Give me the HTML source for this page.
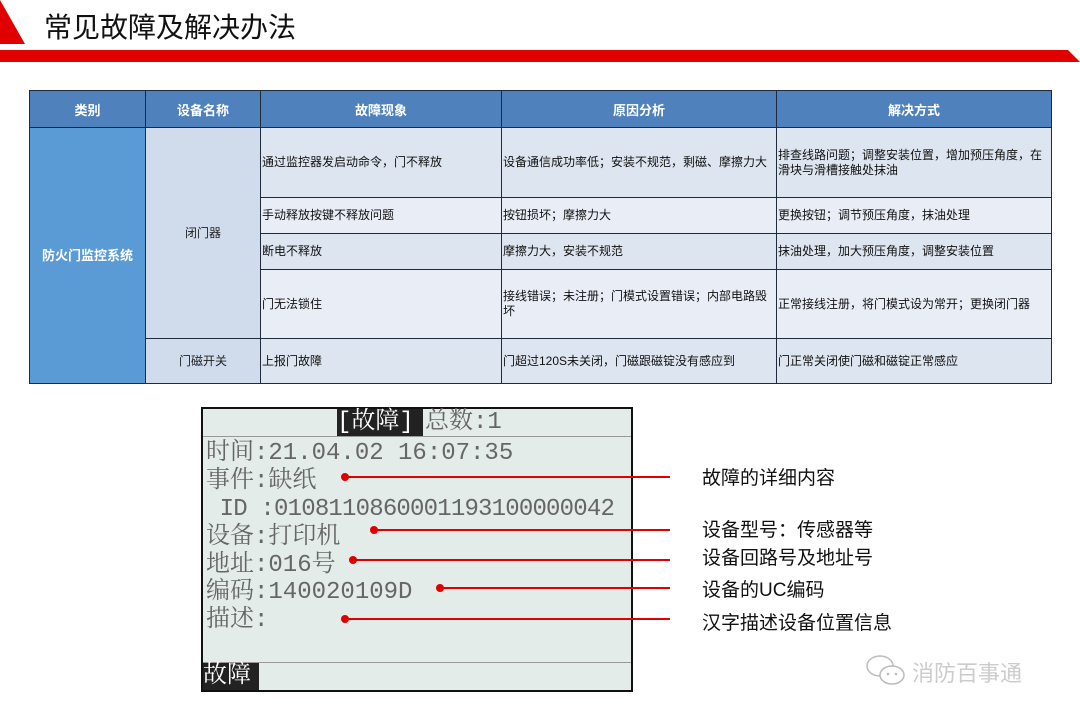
<!DOCTYPE html>
<html><head><meta charset="utf-8"><style>
body{margin:0;width:1080px;height:720px;background:#fff;position:relative;overflow:hidden;font-family:"Liberation Sans","Noto Sans CJK SC",sans-serif}
.abs{position:absolute}
table{position:absolute;left:29px;top:90px;width:1022px;table-layout:fixed;border-collapse:collapse;font-size:12px;color:#111}
td{border:1px solid #1f2a3a;padding:0 1px;vertical-align:middle;line-height:15px}
th{background:#4f81bd;color:#fff;font-weight:bold;font-size:13px;border:1px solid #1f2a3a;height:36px;padding:0}
.a{background:#5b9bd5;color:#fff;font-weight:bold;font-size:13px;text-align:center}
.b{background:#d0dcec;text-align:center;color:#222}
.d{background:#dde5f0}.l{background:#e9eef6}
.scr{left:201px;top:407px;width:428px;height:281px;border:2px solid #111;background:#e4ecea;font-family:"Liberation Mono","Noto Serif CJK SC",monospace;color:#666}
.ln{position:absolute;height:2px;background:#e00000}
.dot{position:absolute;width:8px;height:8px;border-radius:50%;background:#e00000}
.lab{position:absolute;left:702px;font-size:19px;color:#111}
.r{position:absolute;left:3px;font-size:24px;line-height:28px;white-space:nowrap}
</style></head><body>
<svg class="abs" style="left:0;top:0" width="1080" height="64">
<polygon points="0,0 0,44 25,44" fill="#e00000"/>
<polygon points="0,50 1068,50 1080,62 0,62" fill="#e00000"/>
</svg>
<div class="abs" style="left:44px;top:6px;font-size:28px;color:#111">常见故障及解决办法</div>
<table>
<colgroup><col style="width:116px"><col style="width:115px"><col style="width:241px"><col style="width:275px"><col style="width:275px"></colgroup>
<tr><th>类别</th><th>设备名称</th><th>故障现象</th><th>原因分析</th><th>解决方式</th></tr>
<tr style="height:70px"><td class="a" rowspan="5">防火门监控系统</td><td class="b" rowspan="4">闭门器</td><td class="d">通过监控器发启动命令，门不释放</td><td class="d">设备通信成功率低；安装不规范，剩磁、摩擦力大</td><td class="d">排查线路问题；调整安装位置，增加预压角度，在滑块与滑槽接触处抹油</td></tr>
<tr style="height:36px"><td class="l">手动释放按键不释放问题</td><td class="l">按钮损坏；摩擦力大</td><td class="l">更换按钮；调节预压角度，抹油处理</td></tr>
<tr style="height:36px"><td class="d">断电不释放</td><td class="d">摩擦力大，安装不规范</td><td class="d">抹油处理，加大预压角度，调整安装位置</td></tr>
<tr style="height:69px"><td class="l">门无法锁住</td><td class="l">接线错误；未注册；门模式设置错误；内部电路毁坏</td><td class="l">正常接线注册，将门模式设为常开；更换闭门器</td></tr>
<tr style="height:45px"><td class="b">门磁开关</td><td class="d">上报门故障</td><td class="d">门超过120S未关闭，门磁跟磁锭没有感应到</td><td class="d">门正常关闭使门磁和磁锭正常感应</td></tr>
</table>
<div class="abs scr">
<div class="abs" style="left:0;top:27px;width:428px;height:1px;background:#999"></div>
<div class="abs" style="left:134px;top:0;width:86px;height:27px;background:#222;color:#fff;font-size:24px;line-height:27px">[故障]</div>
<div class="abs" style="left:222px;top:0;font-size:24px;line-height:27px">总数:1</div>
<div class="r" style="top:31px">时间:21.04.02 16:07:35</div>
<div class="r" style="top:59px">事件:缺纸</div>
<div class="r" style="top:87px;letter-spacing:-0.8px">&nbsp;ID :0108110860001193100000042</div>
<div class="r" style="top:115px">设备:打印机</div>
<div class="r" style="top:143px">地址:016号</div>
<div class="r" style="top:170px">编码:140020109D</div>
<div class="r" style="top:198px">描述:</div>
<div class="abs" style="left:0;top:253px;width:428px;height:1px;background:#999"></div>
<div class="abs" style="left:0;top:254px;width:56px;height:27px;background:#222;color:#fff;font-size:24px;line-height:27px">故障</div>
</div>
<div class="dot" style="left:341px;top:473px"></div><div class="ln" style="left:345px;top:476px;width:325px"></div>
<div class="dot" style="left:370px;top:526px"></div><div class="ln" style="left:374px;top:529px;width:296px"></div>
<div class="dot" style="left:349px;top:556px"></div><div class="ln" style="left:353px;top:559px;width:317px"></div>
<div class="dot" style="left:436px;top:584px"></div><div class="ln" style="left:440px;top:587px;width:230px"></div>
<div class="dot" style="left:341px;top:615px"></div><div class="ln" style="left:345px;top:618px;width:325px"></div>
<div class="lab" style="top:463px">故障的详细内容</div>
<div class="lab" style="top:515px">设备型号：传感器等</div>
<div class="lab" style="top:543px">设备回路号及地址号</div>
<div class="lab" style="top:575px">设备的UC编码</div>
<div class="lab" style="top:608px">汉字描述设备位置信息</div>
<svg class="abs" style="left:864px;top:654px" width="48" height="36"><ellipse cx="16" cy="12" rx="13" ry="10" fill="none" stroke="#bbb" stroke-width="1.5"/><ellipse cx="28" cy="21" rx="12" ry="9" fill="#fff" stroke="#bbb" stroke-width="1.5"/><circle cx="24" cy="20" r="1.3" fill="#bbb"/><circle cx="32" cy="20" r="1.3" fill="#bbb"/></svg>
<div class="abs" style="left:912px;top:656px;font-size:22px;color:#ccc">消防百事通</div>
</body></html>
